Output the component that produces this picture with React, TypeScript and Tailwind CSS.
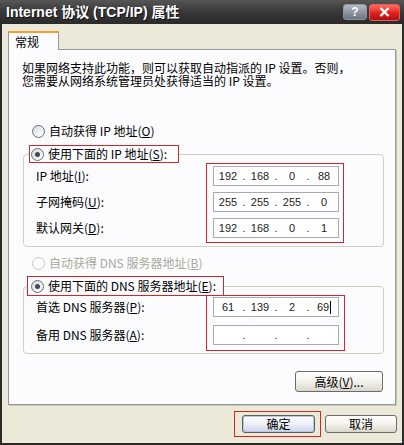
import type { ReactNode } from 'react';

const CJK = "font-['Noto_Sans_CJK_SC','Liberation_Sans',sans-serif]";

interface FieldRow {
    label: ReactNode;
    parts: [string, string, string, string];
    caret?: boolean;
}

const IP_ROWS: FieldRow[] = [
    { label: <>IP 地址(<u>I</u>):</>, parts: ['192', '168', '0', '88'] },
    { label: <>子网掩码(<u>U</u>):</>, parts: ['255', '255', '255', '0'] },
    { label: <>默认网关(<u>D</u>):</>, parts: ['192', '168', '0', '1'] },
];

const DNS_ROWS: FieldRow[] = [
    { label: <>首选 DNS 服务器(<u>P</u>):</>, parts: ['61', '139', '2', '69'], caret: true },
    { label: <>备用 DNS 服务器(<u>A</u>):</>, parts: ['', '', '', ''] },
];

export default function App() {
    return (
        <div className={`flex h-[445px] w-[404px] flex-col text-[12px] leading-none text-black ${CJK}`}>
            <TitleBar />
            <div className="flex flex-1 flex-col border-x-2 border-b-2 border-[#2b2b2b] bg-[#ece9d8] pt-[7px]">
                <div className="ml-[6px] flex">
                    <div className="relative z-10 -mb-px flex h-[19px] w-[51px] items-center border-x border-t-2 border-x-[#919b9c] border-t-[#f0a030] bg-[#fcfcfe] pl-[6px]">
                        常规
                    </div>
                </div>
                <TabPanel />
                <div className="mr-[5px] mt-[6px] flex items-center justify-end gap-[4px]">
                    <div className="border border-[#d4262a] pb-[3px] pl-[7px] pr-[5px] pt-[3px]">
                        <XpButton width="w-[73px]" primary>
                            确定
                        </XpButton>
                    </div>
                    <XpButton width="w-[72px]">取消</XpButton>
                </div>
            </div>
        </div>
    );
}

function TitleBar() {
    return (
        <div className="flex h-[24px] items-center justify-between bg-gradient-to-b from-[#565656] via-[#383838] to-[#2a2a2a] pl-[6px] pr-[4px]">
            <span className="font-['Liberation_Sans','Noto_Sans_CJK_SC',sans-serif] text-[14px] font-bold text-white [text-shadow:1px_1px_0_#111]">
                Internet 协议 (TCP/IP) 属性
            </span>
            <div className="flex items-center gap-[2px]">
                <div className="flex h-[16px] w-[24px] items-center justify-center rounded-[3px] border border-[#8c949e] bg-gradient-to-b from-[#b6bcc4] to-[#6c747e] font-['Liberation_Sans',sans-serif] text-[12px] font-bold text-white">
                    ?
                </div>
                <div className="flex h-[17px] w-[31px] items-center justify-center rounded-[3px] border border-[#e06060] bg-gradient-to-b from-[#ff6a5a] via-[#e52222] to-[#b01010]">
                    <svg width="11" height="10" viewBox="0 0 11 10">
                        <path d="M1.5 1 L9.5 9 M9.5 1 L1.5 9" stroke="#fff" strokeWidth="2.4" />
                    </svg>
                </div>
            </div>
        </div>
    );
}

function TabPanel() {
    return (
        <div className="mx-[6px] flex flex-col border border-[#919b9c] bg-[#fcfcfe] pb-[12px] pl-[13px] pr-[11px] shadow-[1px_1px_0_#c8c6b8]">
            <p className="mt-[11px] leading-[13px]">
                如果网络支持此功能，则可以获取自动指派的 IP 设置。否则，
                <br />
                您需要从网络系统管理员处获得适当的 IP 设置。
            </p>

            <div className="ml-[10px] mt-[37px] flex h-[14px] items-center gap-[4px]">
                <Radio />
                <span>
                    自动获得 IP 地址(<u>O</u>)
                </span>
            </div>

            <fieldset className="ml-px mt-[7px] rounded-[4px] border border-[#d0d0bf] pb-[3px]">
                <legend className="ml-[5px] flex h-[18px] items-center gap-[4px] border border-[#d4262a] pl-px pr-[11px]">
                    <Radio checked />
                    <span>
                        使用下面的 IP 地址(<u>S</u>):
                    </span>
                </legend>
                <FieldGrid rows={IP_ROWS} gap="gap-[6px]" boxPad="pt-[2px] pb-[4px] pl-[6px] pr-[4px]" />
            </fieldset>

            <div className="ml-[10px] mt-[9px] flex h-[14px] items-center gap-[4px] text-[#aca899]">
                <Radio disabled />
                <span>
                    自动获得 DNS 服务器地址(<u>B</u>)
                </span>
            </div>

            <fieldset className="ml-px mt-[6px] rounded-[4px] border border-[#d0d0bf] pb-[2px]">
                <legend className="ml-[3px] flex h-[20px] items-center gap-[4px] border border-[#d4262a] pl-[3px] pr-[7px]">
                    <Radio checked />
                    <span>
                        使用下面的 DNS 服务器地址(<u>E</u>):
                    </span>
                </legend>
                <div className="-mt-px">
                    <FieldGrid rows={DNS_ROWS} gap="gap-[8px]" boxPad="pt-px pb-[5px] pl-[6px] pr-[5px]" />
                </div>
            </fieldset>

            <div className="mr-px mt-[17px] flex justify-end">
                <XpButton width="w-[88px]" height="h-[21px]">
                    高级(<u>V</u>)...
                </XpButton>
            </div>
        </div>
    );
}

function FieldGrid({ rows, gap, boxPad }: Readonly<{ rows: FieldRow[]; gap: string; boxPad: string }>) {
    return (
        <div className="flex pl-[11px]">
            <div className={`flex w-[171px] flex-col border border-transparent ${boxPad} !pl-0 ${gap}`}>
                {rows.map((row, idx) => (
                    <div key={idx} className="flex h-[20px] items-center">
                        {row.label}
                    </div>
                ))}
            </div>
            <div className={`flex flex-col border border-[#d4262a] ${boxPad} ${gap}`}>
                {rows.map((row, idx) => (
                    <IpField key={idx} parts={row.parts} caret={row.caret} />
                ))}
            </div>
        </div>
    );
}

function IpField({ parts, caret }: Readonly<{ parts: FieldRow['parts']; caret?: boolean }>) {
    return (
        <div className="flex h-[20px] w-[126px] items-center border border-[#a5acb5] bg-white px-px font-['Liberation_Sans',sans-serif] text-[11px] text-[#222]">
            {parts.map((part, idx) => (
                <div key={idx} className="flex items-center">
                    {idx > 0 && <span className="w-[6px] text-center">.</span>}
                    <span className="flex w-[26px] items-center justify-center">
                        {part}
                        {caret && idx === 3 && <span className="ml-px inline-block h-[13px] w-px bg-black" />}
                    </span>
                </div>
            ))}
        </div>
    );
}

function Radio({ checked, disabled }: Readonly<{ checked?: boolean; disabled?: boolean }>) {
    return (
        <span
            className={
                disabled
                    ? 'flex h-[13px] w-[13px] shrink-0 items-center justify-center rounded-full border border-[#cac8bb] bg-white'
                    : 'flex h-[13px] w-[13px] shrink-0 items-center justify-center rounded-full border border-[#5f6f86] bg-gradient-to-br from-[#dcdcd6] to-white'
            }
        >
            {checked && <span className="h-[5px] w-[5px] rounded-full bg-[#3e4a60]" />}
        </span>
    );
}

function XpButton({
    children,
    width,
    height = 'h-[18px]',
    primary,
}: Readonly<{ children: ReactNode; width: string; height?: string; primary?: boolean }>) {
    return (
        <div
            className={
                primary
                    ? `flex ${width} ${height} items-center justify-center rounded-[3px] border border-[#5c5c5c] bg-gradient-to-b from-[#ffffff] via-[#eef0f8] to-[#c9d3ea] shadow-[inset_0_0_0_1px_#b8c8ea]`
                    : `flex ${width} ${height} items-center justify-center rounded-[3px] border border-[#6b6b6b] bg-gradient-to-b from-[#ffffff] via-[#f3f2ec] to-[#d8d6cc]`
            }
        >
            {children}
        </div>
    );
}
